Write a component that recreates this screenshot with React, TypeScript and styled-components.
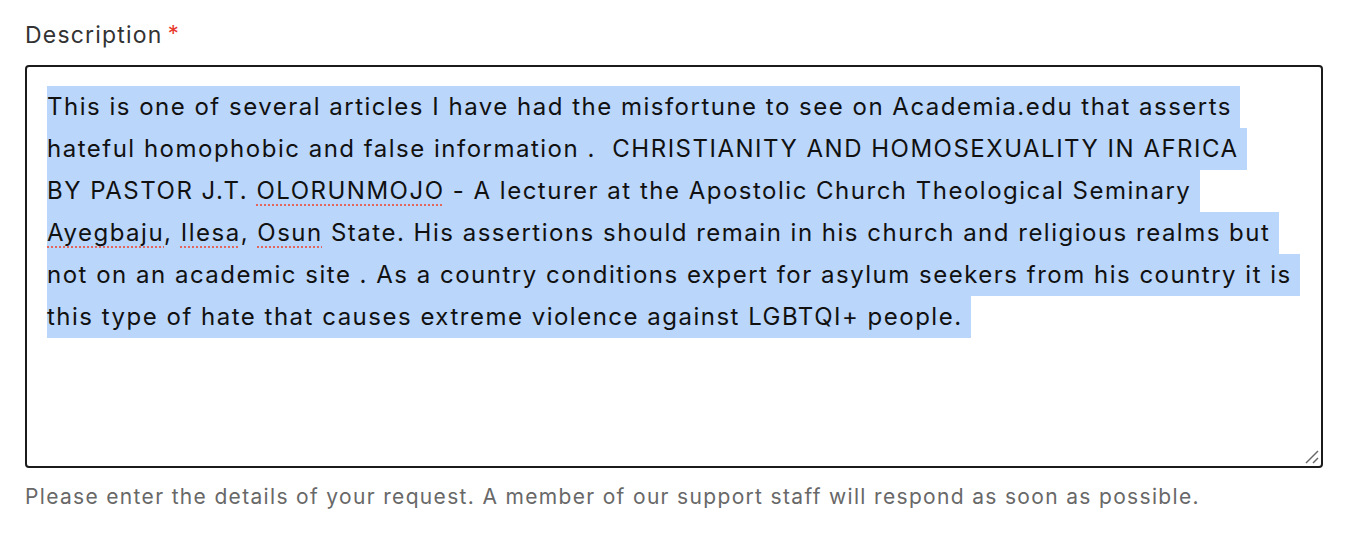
import React from "react";
import styled, { createGlobalStyle } from "styled-components";

const Global = createGlobalStyle`
  html, body { margin: 0; padding: 0; background: #ffffff; }
  body { font-family: Inter, "Noto Sans", "Liberation Sans", sans-serif; }
`;

const Field = styled.div`
  padding: 20px 35px 0 25px;
  display: flex;
  flex-direction: column;
`;

const Label = styled.label`
  display: flex;
  align-items: flex-start;
  gap: 5px;
  font-size: 23px;
  letter-spacing: 1.2px;
  line-height: 30px;
  color: #333333;
  height: 30px;
`;

const Required = styled.span`
  color: #e8372c;
  font-size: 22px;
  line-height: 26px;
`;

const Box = styled.div`
  margin-top: 15px;
  position: relative;
  box-sizing: border-box;
  height: 403px;
  border: 2px solid #1b1b1b;
  border-radius: 4px;
  padding: 19px 20px;
  font-size: 24px;
  letter-spacing: 1.5px;
  line-height: 42px;
  color: #111111;
`;

const Line = styled.div`
  display: block;
  height: 42px;
`;

const Sel = styled.span`
  background: #bad6fb;
  white-space: pre;
  display: inline-block;
  height: 42px;
`;

const Misspelt = styled.span`
  text-decoration: underline dotted #e2665c;
  text-decoration-thickness: 2px;
  text-underline-offset: 5px;
`;

const Grip = styled.svg`
  position: absolute;
  right: 1px;
  bottom: 1px;
`;

const Help = styled.p`
  margin: 15px 0 0;
  font-size: 21px;
  letter-spacing: 1.33px;
  line-height: 28px;
  color: #686868;
`;

export default function App() {
  return (
    <>
      <Global />
      <Field>
        <Label>
          Description<Required>*</Required>
        </Label>
        <Box>
          <Line><Sel>This is one of several articles I have had the misfortune to see on Academia.edu that asserts </Sel></Line>
          <Line><Sel>hateful homophobic and false information .  CHRISTIANITY AND HOMOSEXUALITY IN AFRICA </Sel></Line>
          <Line><Sel>BY PASTOR J.T. <Misspelt>OLORUNMOJO</Misspelt> - A lecturer at the Apostolic Church Theological Seminary </Sel></Line>
          <Line><Sel><Misspelt>Ayegbaju</Misspelt>, <Misspelt>Ilesa</Misspelt>, <Misspelt>Osun</Misspelt> State. His assertions should remain in his church and religious realms but </Sel></Line>
          <Line><Sel>not on an academic site . As a country conditions expert for asylum seekers from his country it is </Sel></Line>
          <Line><Sel>this type of hate that causes extreme violence against LGBTQI+ people. </Sel></Line>
          <Grip width="16" height="16" viewBox="0 0 16 16">
            <line x1="2" y1="14" x2="14" y2="2" stroke="#666" strokeWidth="1.4" />
            <line x1="9" y1="14" x2="14" y2="9" stroke="#666" strokeWidth="1.4" />
          </Grip>
        </Box>
        <Help>Please enter the details of your request. A member of our support staff will respond as soon as possible.</Help>
      </Field>
    </>
  );
}
